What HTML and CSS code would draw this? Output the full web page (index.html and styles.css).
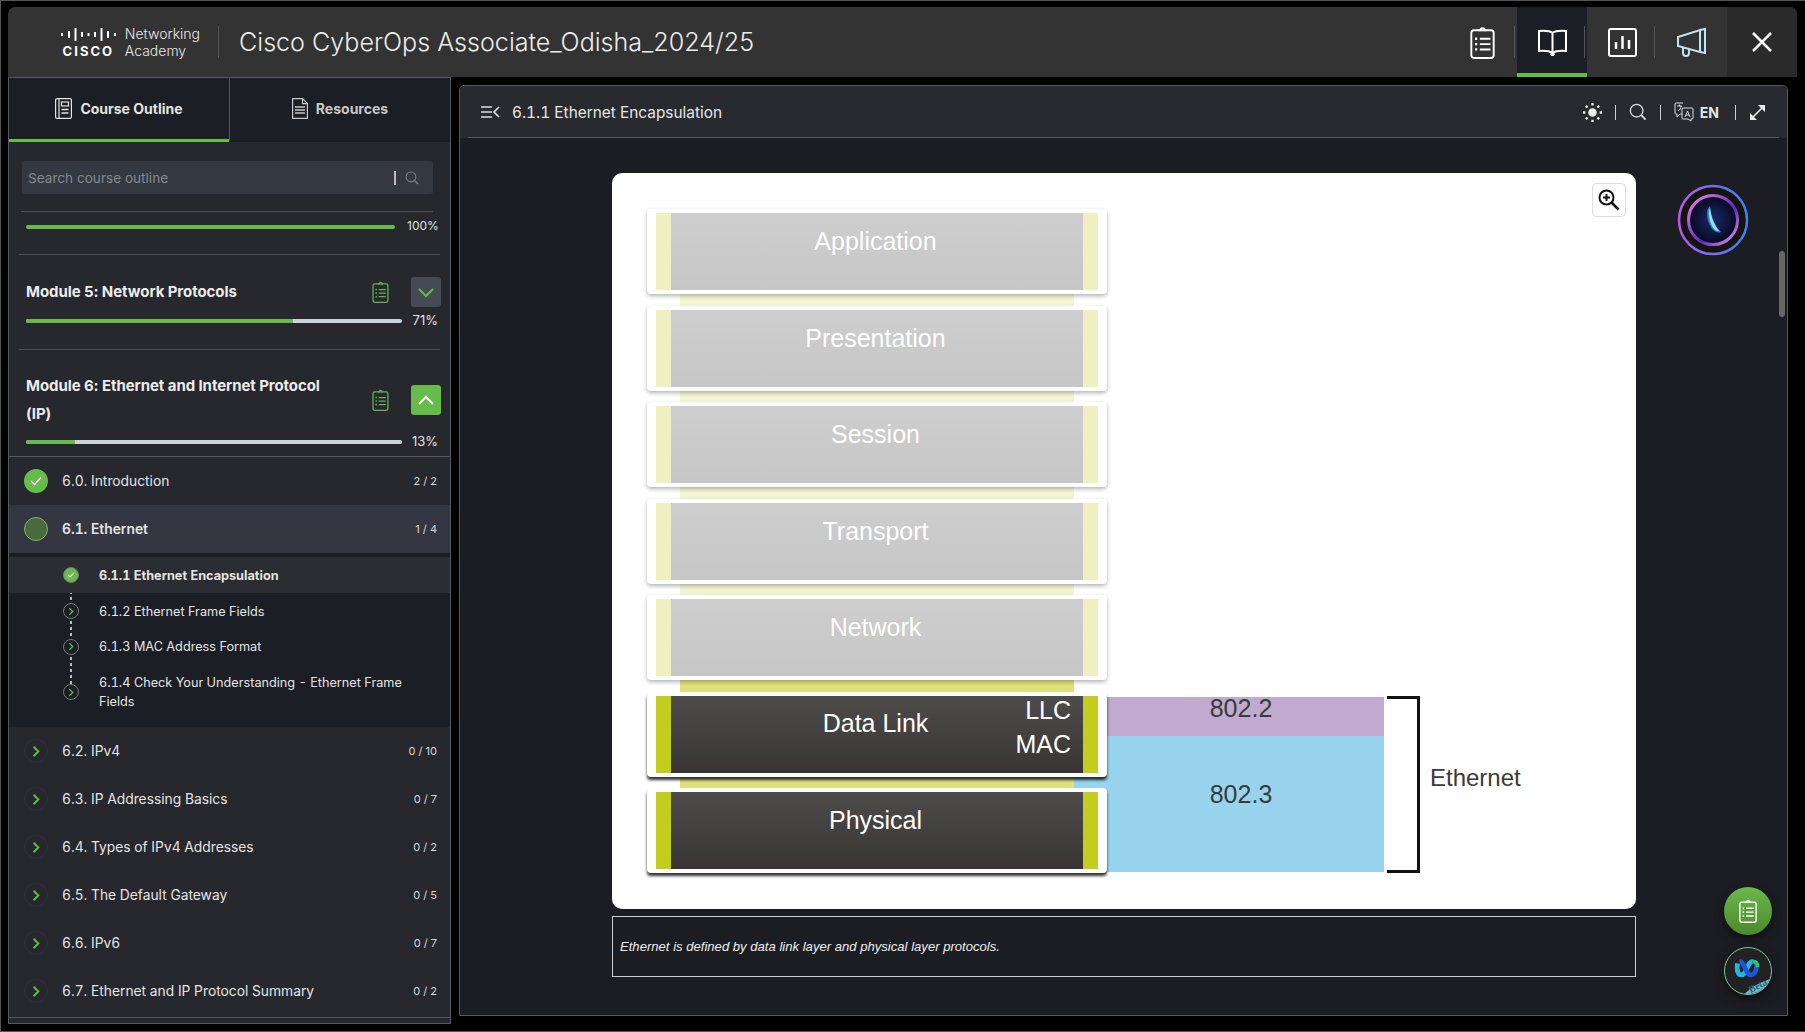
FILE: index.html
```html
<!DOCTYPE html>
<html lang="en">
  <head>
    <meta charset="UTF-8" />
    <title>Cisco CyberOps Associate_Odisha_2024/25</title>
    <link rel="stylesheet" href="styles.css">
  </head>

  <body>
    <svg class="sprite" xmlns="http://www.w3.org/2000/svg">
      <symbol id="clipboard" viewBox="0 0 23 31">
        <path d="M8 4h1.500a2 2 0 0 1 4 0H15" fill="none" stroke="currentColor" stroke-width="1.800"/>
        <rect x="1" y="4" width="21" height="26" rx="2.500" fill="none" stroke="currentColor" stroke-width="1.800"/>
        <path d="M9 12h10M9 17h10M9 22h10" stroke="currentColor" stroke-width="1.800"/>
        <path d="M4.500 12h2M4.500 17h2M4.500 22h2" stroke="currentColor" stroke-width="2.200"/>
      </symbol>
      <symbol id="chevron" viewBox="0 0 10 16">
        <path d="M2 2l6 6-6 6" fill="none" stroke="currentColor" stroke-width="2.400"/>
      </symbol>
      <symbol id="search" viewBox="0 0 20 20">
        <circle cx="8.500" cy="8.500" r="7" fill="none" stroke="currentColor" stroke-width="1.500"/>
        <path d="M13.500 13.500l5 5" stroke="currentColor" stroke-width="2"/>
      </symbol>
    </svg>

    <div class="app">
      <header class="topbar">
        <div class="brand">
          <div class="cisco-logo">
            <svg class="cisco-bars" viewBox="0 0 55 14" width="55" height="14">
              <path d="M1 6v3M8 4v7M14.500 1v13M21 5v5M27.500 6v3M34 5v5M40.500 1v13M47 4v7M54 6v3" stroke="#fff" stroke-width="2"/>
            </svg>
            <span class="cisco-word">CISCO</span>
          </div>
          <div class="academy">Networking<br />Academy</div>
        </div>
        <h1 class="course-title">Cisco CyberOps Associate_Odisha_2024/25</h1>
        <nav class="top-actions">
          <button class="top-btn">
            <svg width="25" height="33"><use href="#clipboard"/></svg>
          </button>
          <button class="top-btn active">
            <svg width="29" height="27" viewBox="0 0 29 27">
              <path d="M14.500 4C12 2 7 1.500 1 2v20c6-.5 10.500 0 13.500 2 3-2 7.500-2.500 13.500-2V2c-6-.5-11 0-13.500 2zM14.500 4v20M12.500 24.500l2 2 2-2" fill="none" stroke="#fff" stroke-width="2"/>
            </svg>
          </button>
          <button class="top-btn">
            <svg width="29" height="29" viewBox="0 0 29 29">
              <rect x="1" y="1" width="27" height="27" rx="2" fill="none" stroke="#fff" stroke-width="2"/>
              <path d="M8 21v-7M14.500 21V8M21 21v-9" stroke="#fff" stroke-width="2.500"/>
            </svg>
          </button>
          <button class="top-btn announce">
            <svg width="30" height="30" viewBox="0 0 30 30">
              <path d="M1 10l22-7v22L1 19zM23 3l5-1v24l-5-1z" fill="none" stroke="#bfe3f5" stroke-width="2"/>
              <path d="M6 20v6a2.500 2.500 0 0 0 6 0v-4" fill="none" stroke="#bfe3f5" stroke-width="2"/>
            </svg>
          </button>
          <button class="top-btn close">
            <svg width="20" height="20" viewBox="0 0 20 20">
              <path d="M1 1l18 18M19 1L1 19" stroke="#fff" stroke-width="2.500"/>
            </svg>
          </button>
        </nav>
      </header>

      <div class="workspace">
        <aside class="sidebar">
          <div class="tabs">
            <div class="tab active">
              <svg width="17" height="21" viewBox="0 0 17 21">
                <rect x=".6" y=".6" width="15.800" height="19.800" rx="1.500" fill="none" stroke="currentColor" stroke-width="1.200"/>
                <path d="M4 1v19" stroke="currentColor" stroke-width="1.200"/>
                <rect x="6.500" y="4" width="7" height="4" fill="none" stroke="currentColor" stroke-width="1.200"/>
                <path d="M6.500 11.500h7M6.500 15h7" stroke="currentColor" stroke-width="1.400"/>
              </svg>
              Course Outline
            </div>
            <div class="tab">
              <svg width="16" height="21" viewBox="0 0 16 21">
                <path d="M.6.6h10l4.800 5v14.800H.6zM10.500.6v5h5" fill="none" stroke="currentColor" stroke-width="1.200"/>
                <path d="M3 9h10M3 12h10M3 15h10" stroke="currentColor" stroke-width="1.400"/>
              </svg>
              Resources
            </div>
          </div>

          <div class="outline-head">
            <div class="search-box">
              <span class="search-text">Search course outline</span>
              <span class="search-caret"></span>
              <svg class="search-icon" width="14" height="14"><use href="#search"/></svg>
            </div>
            <div class="course-progress">
              <div class="bar"><div class="bar-fill" style="width: 100%"></div></div>
              <span class="pct">100%</span>
            </div>
          </div>

          <section class="module">
            <div class="module-row">
              <h2 class="module-name">Module 5: Network Protocols</h2>
              <svg class="module-check" width="17" height="22"><use href="#clipboard"/></svg>
              <button class="toggle">
                <svg width="18" height="11" viewBox="0 0 18 11"><path d="M2 2l7 7 7-7" fill="none" stroke="#66bb4a" stroke-width="2"/></svg>
              </button>
            </div>
            <div class="module-progress">
              <div class="bar"><div class="bar-fill" style="width: 71%"></div></div>
              <span class="pct">71%</span>
            </div>
          </section>

          <section class="module open">
            <div class="module-row">
              <h2 class="module-name">Module 6: Ethernet and Internet Protocol (IP)</h2>
              <svg class="module-check" width="17" height="22"><use href="#clipboard"/></svg>
              <button class="toggle">
                <svg width="18" height="11" viewBox="0 0 18 11"><path d="M2 9l7-7 7 7" fill="none" stroke="#fff" stroke-width="2"/></svg>
              </button>
            </div>
            <div class="module-progress">
              <div class="bar"><div class="bar-fill" style="width: 13%"></div></div>
              <span class="pct">13%</span>
            </div>
          </section>

          <div class="topics">
            <div class="topic">
              <span class="dot done">
                <svg width="12" height="10" viewBox="0 0 12 10"><path d="M1 5l3.500 3.500L11 1.500" fill="none" stroke="#fff" stroke-width="1.300"/></svg>
              </span>
              <span class="topic-name">6.0. Introduction</span>
              <span class="count">2 / 2</span>
            </div>
            <div class="topic current">
              <span class="dot partial"></span>
              <span class="topic-name">6.1. Ethernet</span>
              <span class="count">1 / 4</span>
            </div>

            <div class="subtopics">
              <div class="trail"></div>
              <div class="sub selected">
                <span class="sub-dot done">
                  <svg width="8" height="6" viewBox="0 0 8 6"><path d="M1 3l2 2 4-4" fill="none" stroke="#fff" stroke-width="1.100"/></svg>
                </span>
                <span>6.1.1 Ethernet Encapsulation</span>
              </div>
              <div class="sub">
                <span class="sub-dot"><svg width="6" height="9"><use href="#chevron"/></svg></span>
                <span>6.1.2 Ethernet Frame Fields</span>
              </div>
              <div class="sub short">
                <span class="sub-dot"><svg width="6" height="9"><use href="#chevron"/></svg></span>
                <span>6.1.3 MAC Address Format</span>
              </div>
              <div class="sub wrap">
                <span class="sub-dot"><svg width="6" height="9"><use href="#chevron"/></svg></span>
                <span>6.1.4 Check Your Understanding - Ethernet Frame Fields</span>
              </div>
            </div>

            <div class="topic">
              <span class="dot idle"><svg width="8" height="13"><use href="#chevron"/></svg></span>
              <span class="topic-name">6.2. IPv4</span>
              <span class="count">0 / 10</span>
            </div>
            <div class="topic">
              <span class="dot idle"><svg width="8" height="13"><use href="#chevron"/></svg></span>
              <span class="topic-name">6.3. IP Addressing Basics</span>
              <span class="count">0 / 7</span>
            </div>
            <div class="topic">
              <span class="dot idle"><svg width="8" height="13"><use href="#chevron"/></svg></span>
              <span class="topic-name">6.4. Types of IPv4 Addresses</span>
              <span class="count">0 / 2</span>
            </div>
            <div class="topic">
              <span class="dot idle"><svg width="8" height="13"><use href="#chevron"/></svg></span>
              <span class="topic-name">6.5. The Default Gateway</span>
              <span class="count">0 / 5</span>
            </div>
            <div class="topic">
              <span class="dot idle"><svg width="8" height="13"><use href="#chevron"/></svg></span>
              <span class="topic-name">6.6. IPv6</span>
              <span class="count">0 / 7</span>
            </div>
            <div class="topic">
              <span class="dot idle"><svg width="8" height="13"><use href="#chevron"/></svg></span>
              <span class="topic-name">6.7. Ethernet and IP Protocol Summary</span>
              <span class="count">0 / 2</span>
            </div>
          </div>
        </aside>

        <main class="panel">
          <div class="panel-head">
            <svg class="outline-toggle" width="19" height="12" viewBox="0 0 19 12">
              <path d="M0 1h11M0 6h11M0 11h11" stroke="#ddd" stroke-width="1.700"/>
              <path d="M18 1l-5 5 5 5" fill="none" stroke="#ddd" stroke-width="1.700"/>
            </svg>
            <span class="panel-title">6.1.1 Ethernet Encapsulation</span>
            <div class="panel-tools">
              <svg width="19" height="19" viewBox="0 0 20 20">
                <circle cx="10" cy="10" r="4.500" fill="#eee"/>
                <path d="M10 0v2.500M10 17.500V20M0 10h2.500M17.500 10H20M3 3l1.800 1.800M15.200 15.200L17 17M17 3l-1.800 1.800M4.800 15.200L3 17" stroke="#eee" stroke-width="2.400"/>
              </svg>
              <span class="tool-sep"></span>
              <svg class="tool-search" width="18" height="18"><use href="#search"/></svg>
              <span class="tool-sep"></span>
              <svg width="20" height="20" viewBox="0 0 20 20">
                <path d="M9 1H2a1 1 0 0 0-1 1v9a1 1 0 0 0 1 1h1v3l3-3h2M9 6h9a1 1 0 0 1 1 1v9a1 1 0 0 1-1 1h-1v2l-3-2H9a1 1 0 0 1-1-1V7a1 1 0 0 1 1-1z" fill="none" stroke="#ddd" stroke-width="1"/>
                <path d="M11 15l2.500-6 2.500 6M12 13h3M3 4h5M5.500 2.500V4M4 9c2-1 3-3 3-5" fill="none" stroke="#ddd" stroke-width="1"/>
              </svg>
              <span class="lang">EN</span>
              <span class="tool-sep"></span>
              <svg width="17" height="17" viewBox="0 0 17 17">
                <path d="M3 14L14 3" stroke="#eee" stroke-width="1.600"/>
                <path d="M9 1h7v7zM1 9v7h7z" fill="#eee"/>
              </svg>
            </div>
          </div>

          <div class="panel-body">
            <div class="scrollbar"></div>

            <div class="lesson">
              <div class="figure">
                <button class="zoom-btn">
                  <svg width="22" height="22" viewBox="0 0 22 22">
                    <circle cx="8.500" cy="8.500" r="7" fill="none" stroke="#111" stroke-width="2"/>
                    <path d="M8.500 5v7M5 8.500h7" stroke="#111" stroke-width="2"/>
                    <path d="M13.500 13.500l7 7" stroke="#111" stroke-width="2.500"/>
                  </svg>
                </button>
                <div class="diagram">
                  <div class="stack">
                    <div class="layer faded"><div class="layer-face"><span>Application</span></div></div>
                    <div class="link faded"></div>
                    <div class="layer faded"><div class="layer-face"><span>Presentation</span></div></div>
                    <div class="link faded"></div>
                    <div class="layer faded"><div class="layer-face"><span>Session</span></div></div>
                    <div class="link faded"></div>
                    <div class="layer faded"><div class="layer-face"><span>Transport</span></div></div>
                    <div class="link faded"></div>
                    <div class="layer faded"><div class="layer-face"><span>Network</span></div></div>
                    <div class="link"></div>
                    <div class="layer"><div class="layer-face tight"><span>Data Link</span><em class="tag llc">LLC</em><em class="tag mac">MAC</em></div></div>
                    <div class="link"></div>
                    <div class="layer"><div class="layer-face"><span>Physical</span></div></div>
                  </div>
                  <div class="standards">
                    <div class="std llc-std">802.2</div>
                    <div class="std mac-std">802.3</div>
                  </div>
                  <div class="bracket"></div>
                  <div class="bracket-label">Ethernet</div>
                </div>
              </div>
              <div class="caption">Ethernet is defined by data link layer and physical layer protocols.</div>
            </div>

            <div class="assist">
              <svg class="orb" width="72" height="72" viewBox="0 0 72 72">
                <defs>
                  <linearGradient id="orbRing" x1="0" y1="0" x2="1" y2="0">
                    <stop offset="0" stop-color="#b45ce8"/>
                    <stop offset="1" stop-color="#3b82f6"/>
                  </linearGradient>
                  <linearGradient id="orbInner" x1="0" y1="0" x2="1" y2="1">
                    <stop offset="0" stop-color="#f08af0"/>
                    <stop offset=".6" stop-color="#5b2bc0"/>
                    <stop offset="1" stop-color="#e8a0f0"/>
                  </linearGradient>
                  <radialGradient id="orbCore">
                    <stop offset="0" stop-color="#1c2a6a"/>
                    <stop offset="1" stop-color="#07071c"/>
                  </radialGradient>
                </defs>
                <circle cx="36" cy="36" r="34" fill="#15130d" stroke="url(#orbRing)" stroke-width="2.500"/>
                <circle cx="36" cy="36" r="24.500" fill="url(#orbCore)" stroke="url(#orbInner)" stroke-width="3"/>
                <path d="M30 29c0-3 1-5 3-7 1 11 5 20 11 26-6 3-14-7-14-19z" fill="#2f7fd0"/>
                <path d="M32 28c0-2 .5-3 1-4 1 10 5 18 9 23-5 1-10-8-10-19z" fill="#8fe8f8"/>
              </svg>
              <div class="fabs">
                <button class="fab quiz">
                  <svg width="18" height="24"><use href="#clipboard"/></svg>
                </button>
                <button class="fab webex">
                  <svg width="48" height="48" viewBox="0 0 48 48">
                    <path d="M13 16c-1 6 0 12 4 12 6 0 6-14 12-14" fill="none" stroke="#1fb6e8" stroke-width="5"/>
                    <path d="M15 14c6 0 6 14 12 14 4 0 6-5 6-11" fill="none" stroke="#1f55d8" stroke-width="5"/>
                    <path d="M29 14c4 0 5 3 5 6" fill="none" stroke="#2fc46a" stroke-width="4"/>
                    <path d="M20 48c6-4 7-9 28-16v16z" fill="#62c0d6"/>
                  </svg>
                  <span class="beta">Beta</span>
                </button>
              </div>
            </div>
          </div>
        </main>
      </div>
    </div>
  </body>
</html>
```

FILE: styles.css
```css
* {
  box-sizing: border-box;
  margin: 0;
  padding: 0;
}

html,
body {
  height: 100%;
}

body {
  font-family: "Inter", sans-serif;
  background-color: #000;
  color: #e6e6e6;
  overflow: hidden;
}

button {
  border: none;
  background: transparent;
  font: inherit;
  color: inherit;
}

.sprite {
  width: 0;
  height: 0;
  overflow: hidden;
  display: block;
}

.app {
  height: 1032px;
  border: 1px solid #555;
  border-right: none;
  padding: 6px 8px 7px 7px;
  display: flex;
  flex-direction: column;
}

/* top bar */
.topbar {
  height: 70px;
  flex: none;
  display: flex;
  align-items: center;
  background: #333;
  border-radius: 7px 7px 0 0;
  overflow: hidden;
}

.brand {
  width: 211px;
  height: 32px;
  flex: none;
  display: flex;
  justify-content: flex-end;
  align-items: center;
  gap: 9px;
  padding-right: 18px;
  border-right: 1px solid #555;
}

.cisco-logo {
  display: flex;
  flex-direction: column;
  align-items: center;
  gap: 4px;
}

.cisco-bars {
  display: block;
}

.cisco-word {
  font-size: 13px;
  font-weight: 700;
  letter-spacing: 2px;
  line-height: 12px;
  color: #fff;
}

.academy {
  font-size: 14px;
  font-weight: 300;
  line-height: 17px;
  color: #e8e8e8;
}

.course-title {
  font-size: 25.100px;
  font-weight: 300;
  color: #ececec;
  margin-left: 20px;
  flex: 1;
}

.top-actions {
  display: flex;
  height: 100%;
}

.top-btn {
  width: 70px;
  height: 100%;
  display: flex;
  align-items: center;
  justify-content: center;
  position: relative;
  color: #fff;
}

.top-btn::after {
  content: "";
  position: absolute;
  right: 2px;
  top: 19px;
  height: 32px;
  width: 1px;
  background: #555;
}

.top-btn.active {
  background: #1b1e24;
  border-bottom: 4px solid #66bb4a;
  padding-top: 4px;
}

.top-btn.announce::after,
.top-btn.close::after {
  display: none;
}

.top-btn.close {
  background: #2a2a2a;
}

/* sidebar */
.workspace {
  flex: 1;
  min-height: 0;
  display: flex;
}

.sidebar {
  width: 443px;
  flex: none;
  display: flex;
  flex-direction: column;
  background: #27282e;
  border: 1px solid #555860;
  overflow: hidden;
}

.tabs {
  display: flex;
  height: 64px;
  flex: none;
}

.tab {
  flex: 1;
  display: flex;
  align-items: center;
  justify-content: center;
  gap: 8px;
  font-size: 14px;
  font-weight: 700;
  color: #c8c8c8;
  background: #1b1e24;
  border-left: 1px solid #555860;
  border-bottom: 3px solid transparent;
}

.tab.active {
  flex: none;
  width: 220px;
  border-left: none;
  border-bottom-color: #66bb4a;
  color: #e4e4e4;
}

.outline-head {
  padding: 19px 17px 0 13px;
  flex: none;
}

.search-box {
  height: 33px;
  background: #343840;
  border-radius: 3px;
  display: flex;
  align-items: center;
  padding: 0 14px 0 6px;
}

.search-text {
  flex: 1;
  font-size: 13.600px;
  color: #85888e;
}

.search-caret {
  width: 2px;
  height: 14px;
  background: #bbb;
  margin-right: 9px;
}

.search-icon {
  color: #7b7f85;
}

.course-progress {
  display: flex;
  align-items: center;
  margin: 17px 0 0 -1px;
  padding: 2px 0 0 5px;
  border-top: 1px solid #4c4e55;
  height: 28px;
}

.course-progress .bar {
  width: 369px;
  background: #cdd3da;
  flex: none;
}

.course-progress .pct {
  margin: -2px -4px 0 12px;
  padding: 0;
}

.bar {
  height: 4px;
  border-radius: 2px;
  overflow: hidden;
}

.bar-fill {
  height: 100%;
  background: #66bb4a;
}

.pct {
  font-size: 12px;
  color: #e0e0e0;
  margin-left: auto;
  padding-right: 1px;
}

.module {
  margin: 15px 10px 0 10px;
  border-top: 1px solid #4c4e55;
  padding: 22px 0 0 7px;
  flex: none;
}

.module.open {
  margin-top: 21px;
  padding-top: 22px;
}

.module-row {
  display: flex;
  align-items: center;
  height: 30px;
}

.module.open .module-row {
  height: 56px;
}

.module-name {
  width: 311px;
  margin-right: 35px;
  font-size: 15px;
  font-weight: 700;
  letter-spacing: -0.08px;
  line-height: 28px;
  color: #ececec;
  flex: none;
}

.module-check {
  color: #5fb548;
  flex: none;
}

.toggle {
  width: 30px;
  height: 30px;
  margin-left: 22px;
  border-radius: 3px;
  background: #464a52;
  display: flex;
  align-items: center;
  justify-content: center;
  flex: none;
}

.module.open .toggle {
  background: #66bb4a;
}

.module-progress {
  display: flex;
  align-items: center;
  height: 14px;
  margin-top: 7px;
}

.module.open .module-progress {
  margin-top: 7px;
}

.module-progress .bar {
  width: 376px;
  background: #cdd3da;
  flex: none;
}

.module-progress .pct {
  font-size: 13px;
  margin-right: 1px;
  margin-top: -2px;
}

.topics {
  margin-top: 7px;
  border-top: 1px solid #555860;
  flex: 1;
  border-bottom: 1px solid #555860;
  margin-bottom: 5px;
  overflow: hidden;
}

.topic {
  height: 48px;
  display: flex;
  align-items: center;
  padding: 0 13px 0 15px;
}

.topic.current {
  background: #343741;
}

.topic.current .topic-name {
  font-weight: 600;
}

.topic-name {
  margin-left: 14px;
  font-size: 13.800px;
  font-variant-numeric: tabular-nums;
  flex: 1;
  color: #e4e4e4;
}

.count {
  font-size: 11px;
  color: #d8d8d8;
}

.dot {
  width: 24px;
  height: 24px;
  border-radius: 50%;
  display: flex;
  align-items: center;
  justify-content: center;
  flex: none;
}

.dot.done {
  background: #66bb4a;
}

.dot.partial {
  background: #496b3c;
  border: 1px solid #7fb468;
}

.dot.idle {
  border: 1px solid #2a3442;
  color: #66bb4a;
}

.subtopics {
  position: relative;
  background: #1b1e24;
  padding-top: 4px;
  height: 174px;
}

.trail {
  position: absolute;
  left: 61px;
  top: 20px;
  width: 2px;
  height: 116px;
  background: repeating-linear-gradient(#bbb 0 3px, transparent 3px 6px);
}

.sub {
  position: relative;
  height: 36px;
  display: flex;
  align-items: center;
  gap: 20px;
  padding-left: 54px;
  font-size: 12.700px;
  font-variant-numeric: tabular-nums;
  color: #e4e4e4;
}

.sub.short {
  height: 35px;
}

.sub.wrap {
  height: auto;
  padding: 9px 30px 0 54px;
  line-height: 19px;
}

.sub.selected {
  background: #2c2d32;
  font-weight: 700;
}

.sub-dot {
  width: 16px;
  height: 16px;
  border-radius: 50%;
  border: 1px solid #777;
  background: #1b1e24;
  color: #66bb4a;
  display: flex;
  align-items: center;
  justify-content: center;
  flex: none;
}

.sub-dot.done {
  background: #66bb4a;
}

/* lesson panel */
.panel {
  flex: 1;
  min-width: 0;
  margin: 8px 9px 8px 8px;
  background: #1b1d22;
  border: 1px solid #55585f;
  border-radius: 5px 5px 0 0;
  display: flex;
  flex-direction: column;
}

.panel-head {
  height: 52px;
  flex: none;
  display: flex;
  align-items: center;
  background: #282a30;
  padding: 0 21px;
  position: relative;
  border-radius: 5px 5px 0 0;
}

.panel-head::after {
  content: "";
  position: absolute;
  left: 8px;
  right: 8px;
  bottom: 0;
  height: 1px;
  background: #55585f;
}

.panel-title {
  margin-left: 12px;
  font-size: 15.400px;
  font-variant-numeric: tabular-nums;
  color: #e6e6e6;
  flex: 1;
}

.panel-tools {
  display: flex;
  align-items: center;
  gap: 13px;
}

.tool-search {
  color: #ddd;
}

.tool-sep {
  width: 1px;
  height: 15px;
  background: #ccc;
}

.lang {
  font-size: 14px;
  font-weight: 700;
  color: #e6e6e6;
  margin: 0 3px 0 -7px;
}

.panel-body {
  flex: 1;
  min-height: 0;
  position: relative;
  display: flex;
  padding: 35px 0 0 152px;
}

.scrollbar {
  position: absolute;
  right: 2px;
  top: 113px;
  width: 6px;
  height: 66px;
  border-radius: 3px;
  background: #666;
}

.lesson {
  width: 1024px;
  flex: none;
}

.figure {
  position: relative;
  height: 736px;
  background: #fff;
  border-radius: 10px;
  padding: 39px 0 0 35px;
}

.zoom-btn {
  position: absolute;
  top: 10px;
  right: 10px;
  width: 34px;
  height: 34px;
  background: #fff;
  border: 1px solid #ddd;
  border-radius: 4px;
  display: flex;
  align-items: center;
  justify-content: center;
}

.diagram {
  display: flex;
  align-items: flex-end;
  position: relative;
  height: 661px;
}

.stack {
  width: 460px;
  flex: none;
  position: relative;
  z-index: 1;
}

.layer {
  height: 85px;
  padding: 4px 9px;
  background: #fff;
  border-radius: 4px;
  box-shadow: 0 3px 3px rgba(0, 0, 0, 0.8);
  position: relative;
  z-index: 1;
}

.layer.faded {
  box-shadow: 0 2px 4px rgba(0, 0, 0, 0.3);
}

.layer-face {
  height: 77px;
  position: relative;
  border-left: 15px solid #c2cd1e;
  border-right: 15px solid #c2cd1e;
  background: linear-gradient(#4d4b4b, #393535);
  color: #fff;
  font-family: "Liberation Sans", sans-serif;
  font-size: 25px;
  text-align: center;
  padding: 14px 3px 0 0;
  line-height: 29px;
}

.layer-face.tight {
  padding-top: 13px;
}

.faded .layer-face {
  border-color: #eef0c2;
  background: linear-gradient(#cecece, #c6c6c6);
}

.tag {
  position: absolute;
  right: 12px;
  font-style: normal;
}

.tag.llc {
  top: 0;
}

.tag.mac {
  top: 34px;
}

.link {
  height: 11.500px;
  margin: 0 33px;
  background: #dde27c;
}

.link.faded {
  background: #f3f6d4;
}

.standards {
  width: 310px;
  margin-left: -33px;
  margin-bottom: 1px;
  flex: none;
  font-family: "Liberation Sans", sans-serif;
  font-size: 25px;
  color: #3a3a3a;
  text-align: center;
}

.std {
  padding-left: 24px;
}

.llc-std {
  height: 39px;
  background: #c0aad0;
  line-height: 22px;
}

.mac-std {
  height: 136px;
  background: #99d4ef;
  padding-top: 43px;
  line-height: 30px;
}

.bracket {
  width: 33px;
  height: 177px;
  margin-left: 3px;
  border: 3px solid #111;
  border-left: none;
  flex: none;
}

.bracket-label {
  margin-left: 10px;
  margin-bottom: 81px;
  font-family: "Liberation Sans", sans-serif;
  font-size: 24px;
  color: #3a3a3a;
}

.caption {
  margin-top: 7px;
  height: 61px;
  border: 1px solid #ccc;
  display: flex;
  align-items: center;
  padding: 0 7px;
  font-family: "Liberation Sans", sans-serif;
  font-size: 13.100px;
  font-style: italic;
  color: #eee;
}

.assist {
  flex: 1;
  display: flex;
  flex-direction: column;
  align-items: flex-end;
  justify-content: space-between;
  padding: 0 15px 20px 0;
}

.orb {
  margin: 11px 23px 0 0;
  display: block;
}

.fabs {
  display: flex;
  flex-direction: column;
  gap: 12px;
}

.fab {
  width: 48px;
  height: 48px;
  border-radius: 50%;
  position: relative;
  overflow: hidden;
  display: flex;
  align-items: center;
  justify-content: center;
  box-shadow: 0 4px 10px rgba(0, 0, 0, 0.5);
}

.fab.quiz {
  background: linear-gradient(#6cb84a, #4a8a2e);
  color: #fff;
}

.fab.webex {
  background: #222;
  border: 1px solid #7cc4a0;
}

.beta {
  position: absolute;
  right: 4px;
  bottom: 3px;
  font-family: "Liberation Serif", serif;
  font-size: 10px;
  font-weight: 700;
  color: #33606e;
  transform: rotate(-28deg);
}
```
